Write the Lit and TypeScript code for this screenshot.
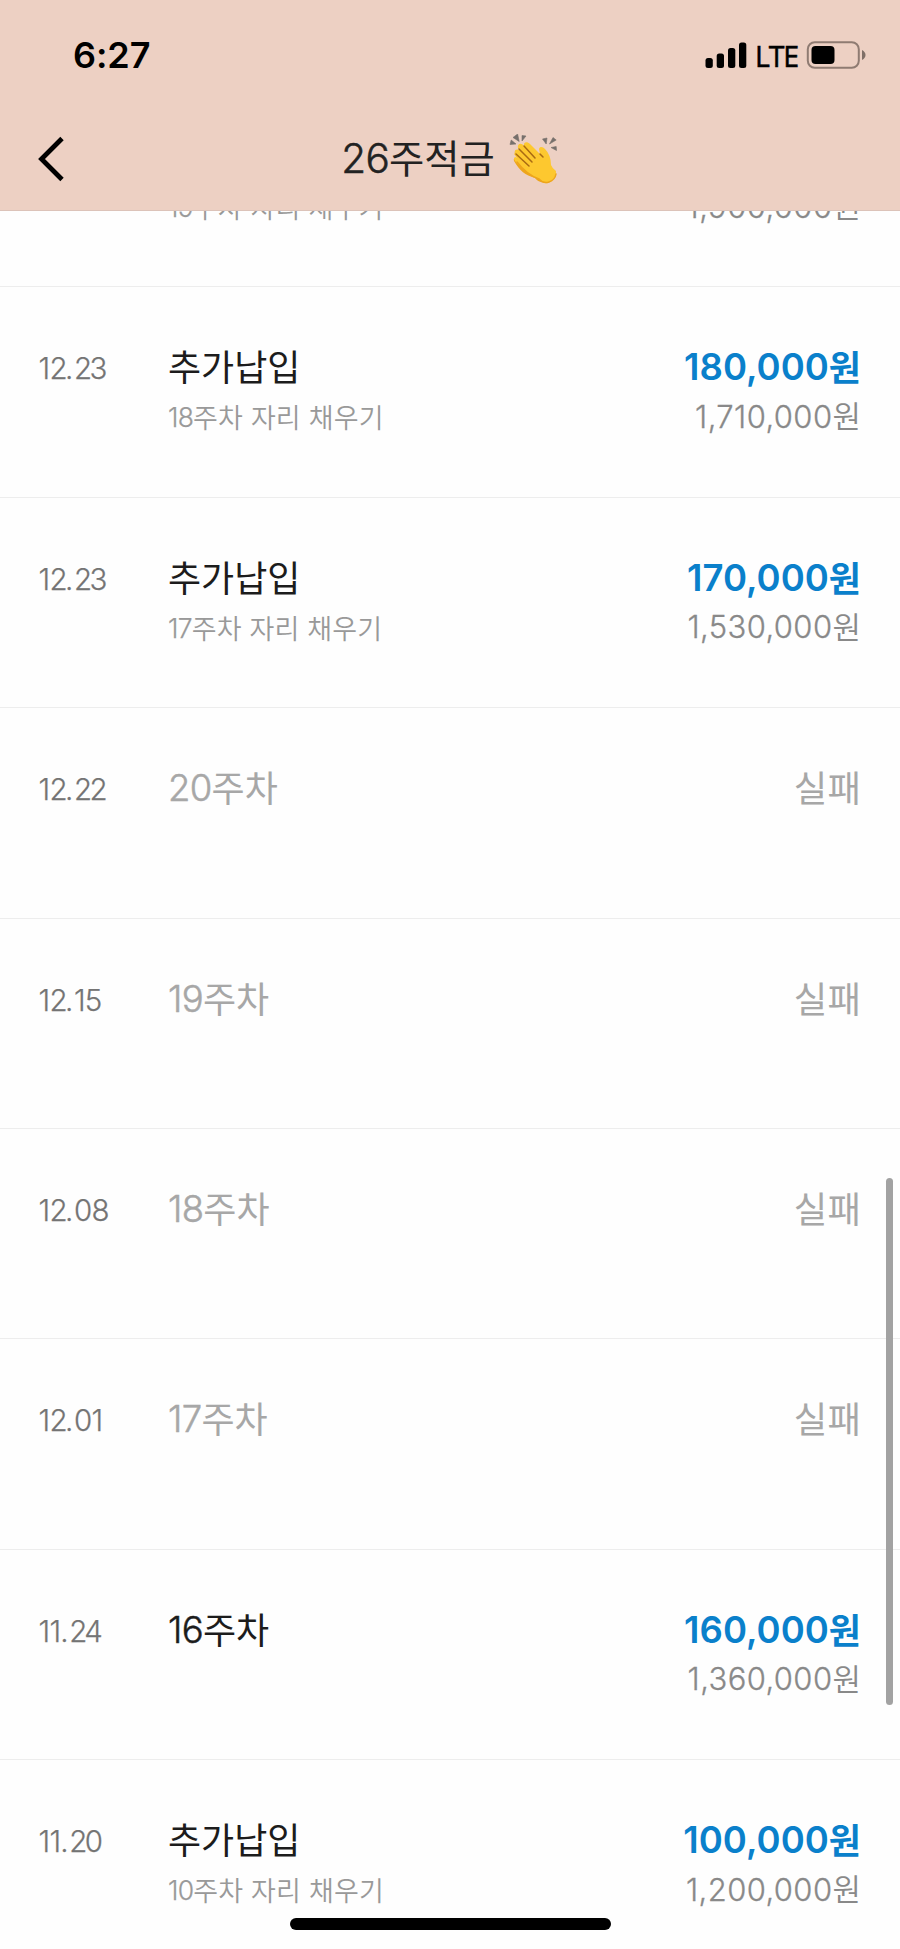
import { LitElement, html, css, svg } from "lit";
import { customElement, property } from "lit/decorators.js";

type Entry = {
  date: string;
  title: string;
  note?: string;
  amount: string;
  balance?: string;
  failed?: boolean;
};

const entries: Entry[] = [
  { date: "12.23", title: "추가납입", note: "19주차 자리 채우기", amount: "190,000원", balance: "1,900,000원" },
  { date: "12.23", title: "추가납입", note: "18주차 자리 채우기", amount: "180,000원", balance: "1,710,000원" },
  { date: "12.23", title: "추가납입", note: "17주차 자리 채우기", amount: "170,000원", balance: "1,530,000원" },
  { date: "12.22", title: "20주차", amount: "실패", failed: true },
  { date: "12.15", title: "19주차", amount: "실패", failed: true },
  { date: "12.08", title: "18주차", amount: "실패", failed: true },
  { date: "12.01", title: "17주차", amount: "실패", failed: true },
  { date: "11.24", title: "16주차", amount: "160,000원", balance: "1,360,000원" },
  { date: "11.20", title: "추가납입", note: "10주차 자리 채우기", amount: "100,000원", balance: "1,200,000원" },
];

// Hangul runs get their own span so they can be sized apart from the figures.
const runs = (text: string) =>
  (text.match(/[가-힣 ]+|[^가-힣 ]+/g) ?? []).map((r) =>
    /[가-힣]/.test(r) ? html`<span class="ko">${r}</span>` : html`<span class="num">${r}</span>`
  );

// Dates are set with the open figures 2, 3 and 4 drawn in and a looser full stop.
const dateRuns = (text: string) =>
  [...text].map((c) =>
    /[234]/.test(c) ? html`<span class="tight">${c}</span>` : c === "." ? html`<span class="loose">${c}</span>` : c
  );

const textStyles = css`
  :host { font-family: Inter, "Noto Sans CJK KR", sans-serif; }
  .ko { font-family: "Noto Sans CJK KR", sans-serif; line-height: 0; position: relative; top: 1px; }
  .num { line-height: 0; }
`;

@customElement("history-row")
export class HistoryRow extends LitElement {
  @property({ attribute: false }) entry!: Entry;

  static styles = [
    textStyles,
    css`
      :host { display: block; flex: none; height: 210.4px; box-sizing: border-box; border-bottom: 1px solid #ededed; }
      .row { display: grid; grid-template-columns: 129px 1fr auto; padding: 57px 39px 0; white-space: nowrap; }
      .date { font-size: 29.5px; line-height: 48px; font-weight: 300; color: #747474; letter-spacing: -0.7px; text-indent: -0.5px; -webkit-text-stroke: 0.25px; }
      .tight { letter-spacing: -2.6px; }
      .loose { letter-spacing: 0.6px; }
      .title { font-size: 36.5px; line-height: 46px; font-weight: 300; color: #1c1c1c; letter-spacing: -0.7px; }
      .title .num { -webkit-text-stroke: 0.5px; }
      .title .ko { font-size: 36px; letter-spacing: 0; font-weight: 400; }
      .note { margin-top: 3px; font-size: 26.5px; line-height: 48px; font-weight: 300; color: #999; letter-spacing: -0.8px; }
      .note .num { -webkit-text-stroke: 0.25px; }
      .note .ko { font-size: 27px; letter-spacing: 0.15px; word-spacing: 1.7px; font-weight: 350; }
      .side { text-align: right; }
      .amount { font-size: 36.5px; line-height: 46px; font-weight: 600; color: #0a80cb; letter-spacing: 0; }
      .amount .ko { font-size: 35px; font-weight: 700; }
      .balance { margin-top: 1.5px; font-size: 31px; line-height: 49px; font-weight: 300; color: #898989; letter-spacing: 0.4px; }
      .balance .num { -webkit-text-stroke: 0.3px; }
      .balance .ko { font-size: 31px; font-weight: 350; letter-spacing: 0; top: 0.5px; }
      .failed .title, .failed .amount { color: #a7a7a7; }
      .failed .amount .ko { font-size: 36.5px; font-weight: 400; }
    `,
  ];

  render() {
    const e = this.entry;
    return html`<div class="row ${e.failed ? "failed" : ""}">
      <div class="date">${dateRuns(e.date)}</div>
      <div>
        <div class="title">${runs(e.title)}</div>
        ${e.note ? html`<div class="note">${runs(e.note)}</div>` : ""}
      </div>
      <div class="side">
        <div class="amount">${runs(e.amount)}</div>
        ${e.balance ? html`<div class="balance">${runs(e.balance)}</div>` : ""}
      </div>
    </div>`;
  }
}

@customElement("app-root")
export class AppRoot extends LitElement {
  static styles = [
    textStyles,
    css`
      :host { display: flex; flex-direction: column; position: relative; width: 900px; height: 1949px; overflow: hidden; background: #fefefe; }
      .top { flex: none; height: 211px; box-sizing: border-box; background: #edd0c3; border-bottom: 1px solid #dcc3b9; }
      .status { display: flex; align-items: center; height: 110px; padding: 0 34px 0 73px; color: #000; }
      .time { font-size: 36px; font-weight: 600; line-height: 44px; flex: 1; letter-spacing: -0.1px; }
      .lte { font-size: 28.5px; font-family: "Open Sans", sans-serif; font-weight: 400; line-height: 44px; margin: 1px 9px 0 8px; letter-spacing: -1.1px; width: 42px; white-space: nowrap; -webkit-text-stroke: 0.5px; }
      svg { display: block; }
      .nav { display: grid; grid-template-columns: 1fr auto 1fr; align-items: center; height: 98px; padding: 0 38px; }
      .heading { display: flex; align-items: center; gap: 14px; font-size: 40.5px; line-height: 50px; font-weight: 300; color: #222; letter-spacing: -0.7px; white-space: nowrap; }
      .heading .num { -webkit-text-stroke: 0.5px; }
      .heading .ko { font-size: 38.3px; font-weight: 400; letter-spacing: 0; top: 0; }
      .list { flex: 1; min-height: 0; overflow: hidden; display: flex; flex-direction: column; }
      .list history-row:first-child { margin-top: -134px; }
      .scroll { position: absolute; right: 7px; top: 1178px; width: 7.5px; height: 527px; border-radius: 4px; background: #a2a2a2; }
      .home { position: absolute; left: 290px; bottom: 19px; width: 321px; height: 12px; border-radius: 6px; background: #000; }
    `,
  ];

  private clap() {
    return svg`
      <path fill="#77706c" d="M1 10.5L2.2 6L7 10Z M4 3.5L8.6 0L10.2 7.5Z M13 1.5L17 2L13 7Z M33.5 5L38 4L37.2 10Z M40.5 10L44 3.5L47.2 6Z M42 13.5L47.2 12.5L47.5 16.5Z" stroke="#77706c" stroke-width=".6"/>
      <path fill="#eda51c" d="M5 27C4 23 7 23 9 25L6 20C5 17 7 15 10 17L29 31L33 48Q29 48 26 44C16 41 11 37 5 27Z"/>
      <path fill="#fdc82f" d="M6 19C5 16 8 14 11 17L9 14C8 10 12 8 15 12C14 8 18 7 21 10L31 20L30 15C31 12 34 13 36 15Q42 21 42 31Q43 34 47 37Q48 45 39 49Q34 50 30 45C20 42 15 36 7 28C3 24 6 22 8 24L5 20Z"/>
      <path fill="none" stroke="#a96a12" stroke-width="1.5" stroke-linecap="round" d="M15 12L26 24M10 15L23 28M7 20L20 32M31 20L34 23"/>
      <path fill="none" stroke="#eda51c" stroke-width="1.5" stroke-linecap="round" d="M8 28Q18 41 30 45Q34 50 40 48Q46 46 47 40"/>`;
  }

  render() {
    return html`
      <div class="top">
        <div class="status">
          <div class="time">6:27</div>
          <svg width="42" height="26" viewBox="0 0 42 26">
            <rect x="0.5" y="16" width="7.3" height="10" rx="2.5" />
            <rect x="11.7" y="11.5" width="7.3" height="14.5" rx="2.5" />
            <rect x="23" y="6" width="7.3" height="20" rx="2.5" />
            <rect x="34" y="0.5" width="7.3" height="25.5" rx="2.5" />
          </svg>
          <div class="lte">LTE</div>
          <svg width="60" height="28" viewBox="0 0 60 28">
            <rect x="1.8" y="1.2" width="51" height="25.6" rx="7" fill="none" stroke="#8f7b72" stroke-width="2" />
            <rect x="5.5" y="5" width="23" height="18" rx="4" />
            <path d="M56 9Q59.5 11 59.5 14T56 19Z" fill="#806f67" />
          </svg>
        </div>
        <div class="nav">
          <svg width="27" height="46" viewBox="0 0 27 46">
            <path d="M24 2.5L3.5 23L24 43.5" fill="none" stroke="#000" stroke-width="4.8" />
          </svg>
          <div class="heading">
            <span>${runs("26주적금")}</span>
            <svg width="50" height="51" viewBox="0 0 50 51">${this.clap()}</svg>
          </div>
        </div>
      </div>
      <div class="list">${entries.map((e) => html`<history-row .entry=${e}></history-row>`)}</div>
      <div class="scroll"></div>
      <div class="home"></div>
    `;
  }
}
